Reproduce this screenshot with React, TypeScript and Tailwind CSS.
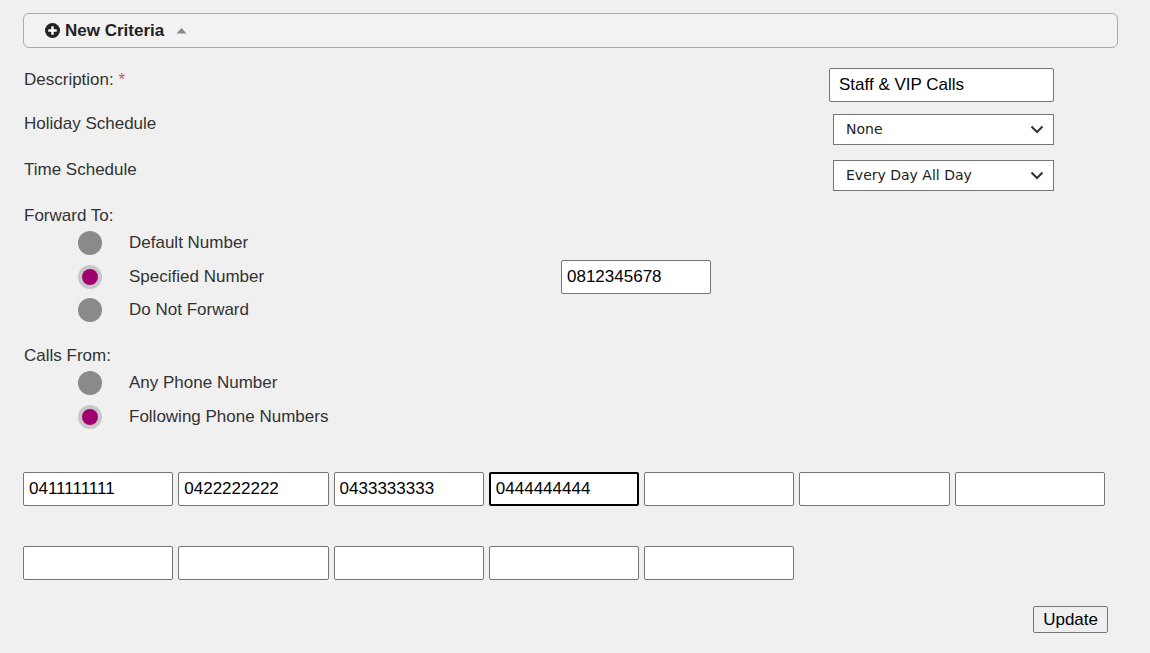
import React from 'react'

const font = { fontFamily: '"Liberation Sans", Arial, sans-serif' }

interface RadioProps {
  checked?: boolean
}

const Radio: React.FC<RadioProps> = ({ checked }) =>
  checked ? (
    <span className="flex h-[24px] w-[24px] items-center justify-center rounded-full bg-[#c8c8c8]">
      <span className="h-[16px] w-[16px] rounded-full bg-[#a0006f]"></span>
    </span>
  ) : (
    <span className="block h-[24px] w-[24px] rounded-full bg-[#8a8a8a]"></span>
  )

const Chevron = () => (
  <svg width="14" height="9" viewBox="0 0 14 9" className="pointer-events-none absolute right-[10px] top-[11px]">
    <path d="M1.5 1.5 L7 7 L12.5 1.5" fill="none" stroke="#333" strokeWidth="2" />
  </svg>
)

const Select: React.FC<{ value: string }> = ({ value }) => (
  <div className="relative h-[31px] w-[221px]">
    <select
      defaultValue={value}
      className="h-full w-full appearance-none border border-[#767676] bg-white pl-[12px] text-[14px] text-[#222] outline-none"
      style={{ fontFamily: '"DejaVu Sans", Verdana, sans-serif' }}
    >
      <option>{value}</option>
    </select>
    <Chevron />
  </div>
)

export default function App() {
  const row1 = ['0411111111', '0422222222', '0433333333', '0444444444', '', '', '']
  const row2 = ['', '', '', '', '']

  return (
    <div className="min-h-[653px] bg-[#f0f0f0] pl-[23px] pr-[32px] pt-[13px] text-[17px] text-[#333]" style={font}>
      {/* header */}
      <div className="flex h-[35px] items-center rounded-[6px] border border-[#ababab] bg-[#f2f2f2] pl-[21px]">
        <svg width="15" height="15" viewBox="0 0 16 16">
          <circle cx="8" cy="8" r="8" fill="#222" />
          <path d="M8 3.5 V12.5 M3.5 8 H12.5" stroke="#fff" strokeWidth="2.6" />
        </svg>
        <span className="ml-[5px] font-bold text-[#222]">New Criteria</span>
        <svg width="11" height="7" viewBox="0 0 11 7" className="ml-[12px]">
          <path d="M0.5 6.5 L5.5 1 L10.5 6.5 Z" fill="#888" />
        </svg>
      </div>

      {/* description */}
      <div className="mt-[20px] flex items-start justify-between pl-[1px] pr-[64px]">
        <div className="pt-[3px] leading-[18px]">
          Description: <span className="text-[#e05050]">*</span>
        </div>
        <input
          defaultValue="Staff & VIP Calls"
          className="h-[34px] w-[225px] rounded-[2px] border border-[#767676] bg-white pl-[9px] text-[17px] text-black outline-none"
        />
      </div>

      <div className="mt-[12px] flex items-start justify-between pl-[1px] pr-[64px]">
        <div className="pt-[1px] leading-[18px]">Holiday Schedule</div>
        <Select value="None" />
      </div>

      <div className="mt-[15px] flex items-start justify-between pl-[1px] pr-[64px]">
        <div className="pt-[1px] leading-[18px]">Time Schedule</div>
        <Select value="Every Day All Day" />
      </div>

      {/* forward to */}
      <div className="mt-[16px] pl-[1px] leading-[18px]">Forward To:</div>
      <div className="mt-[6px] flex flex-col pl-[55px]">
        <div className="flex h-[24px] items-center">
          <Radio />
          <span className="ml-[27px]">Default Number</span>
        </div>
        <div className="mt-[10px] flex h-[24px] items-center">
          <Radio checked />
          <span className="ml-[27px] w-[432px]">Specified Number</span>
          <input
            defaultValue="0812345678"
            className="-mt-[1px] h-[34px] w-[150px] rounded-[2px] border border-[#767676] bg-white pl-[5px] text-[17px] text-black outline-none"
          />
        </div>
        <div className="mt-[9px] flex h-[24px] items-center">
          <Radio />
          <span className="ml-[27px]">Do Not Forward</span>
        </div>
      </div>

      {/* calls from */}
      <div className="mt-[25px] pl-[1px] leading-[18px]">Calls From:</div>
      <div className="mt-[6px] flex flex-col gap-[10px] pl-[55px]">
        <div className="flex h-[24px] items-center">
          <Radio />
          <span className="ml-[27px]">Any Phone Number</span>
        </div>
        <div className="flex h-[24px] items-center">
          <Radio checked />
          <span className="ml-[27px]">Following Phone Numbers</span>
        </div>
      </div>

      {/* phone numbers */}
      <div className="mt-[43px] grid w-[1082px] grid-cols-7 gap-x-[5px] gap-y-[40px]">
        {row1.map((v, i) => (
          <input
            key={`a${i}`}
            defaultValue={v}
            className={`h-[34px] w-full rounded-[2px] bg-white pl-[5px] text-[17px] text-black outline-none ${
              i === 3 ? 'border-2 border-black pl-[4px]' : 'border border-[#767676]'
            }`}
          />
        ))}
        {row2.map((v, i) => (
          <input
            key={`b${i}`}
            defaultValue={v}
            className="h-[34px] w-full rounded-[2px] border border-[#767676] bg-white pl-[5px] text-[17px] text-black outline-none"
          />
        ))}
      </div>

      <div className="mt-[26px] flex justify-end pr-[10px]">
        <button className="h-[27px] rounded-[2px] border border-[#767676] bg-[#efefef] px-[9px] text-[17px] leading-[20px] text-black">
          Update
        </button>
      </div>
    </div>
  )
}
